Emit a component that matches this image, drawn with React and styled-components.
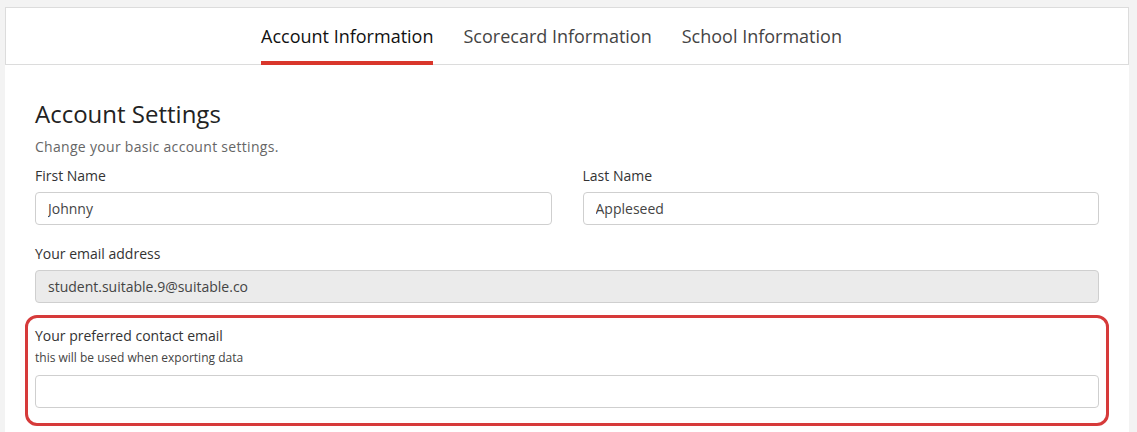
import styled, { createGlobalStyle } from "styled-components"

const GlobalStyle = createGlobalStyle`
    body {
        margin: 0;
        background: #f3f3f3;
        font-family: "Open Sans", "Noto Sans", sans-serif;
        color: #333;
    }
`

const Page = styled.div`
    padding: 7px 8px 0 5px;
    display: flex;
    flex-direction: column;
    height: 100vh;
    box-sizing: border-box;
    overflow: hidden;
`

const TabBar = styled.nav`
    background: #fff;
    border: 1px solid #dcdcdc;
    height: 56px;
    display: flex;
    justify-content: center;
    gap: 30px;
    padding-right: 31px;
    flex-shrink: 0;
`

const Tab = styled.div`
    display: flex;
    align-items: center;
    font-size: 18px;
    color: ${(p) => (p.active ? "#111" : "#444")};
    font-weight: ${(p) => (p.active ? 500 : 400)};
    border-bottom: 4px solid ${(p) => (p.active ? "#d9362b" : "transparent")};
    padding-top: 2px;
    margin-bottom: -1px;
`

const Card = styled.section`
    background: #fff;
    padding: 34px 30px 0 30px;
    flex: 1;
`

const Title = styled.h1`
    margin: 0;
    font-size: 24px;
    font-weight: 500;
    color: #222;
    line-height: 30px;
`

const Subtitle = styled.p`
    margin: 9px 0 0;
    font-size: 14px;
    letter-spacing: 0.3px;
    color: #666;
    line-height: 18px;
`

const Row = styled.div`
    display: grid;
    grid-template-columns: 1fr 1fr;
    gap: 31px;
    margin-top: 11px;
`

const Field = styled.div`
    display: flex;
    flex-direction: column;
    margin-top: ${(p) => p.top || 0}px;
`

const Label = styled.label`
    font-size: 14px;
    color: #333;
    line-height: 18px;
`

const Hint = styled.span`
    font-size: 12px;
    color: #444;
    line-height: 14px;
    margin: 6px 0 3px;
`

const Input = styled.input`
    margin-top: 7px;
    height: 33px;
    box-sizing: border-box;
    border: 1px solid #cfcfcf;
    border-radius: 4px;
    padding: 0 12px;
    font-family: inherit;
    font-size: 14px;
    color: #444;
    background: ${(p) => (p.disabled ? "#ebebeb" : "#fff")};
    outline: none;
`

const Highlight = styled.div`
    margin: 12px -10px 0;
    padding: 9px 7px 15px;
    border: 3px solid #d63a3a;
    border-radius: 12px;
`

export default function App() {
    return (
        <>
            <GlobalStyle />
            <Page>
                <TabBar>
                    <Tab active>Account Information</Tab>
                    <Tab>Scorecard Information</Tab>
                    <Tab>School Information</Tab>
                </TabBar>
                <Card>
                    <Title>Account Settings</Title>
                    <Subtitle>Change your basic account settings.</Subtitle>
                    <Row>
                        <Field>
                            <Label>First Name</Label>
                            <Input defaultValue="Johnny" />
                        </Field>
                        <Field>
                            <Label>Last Name</Label>
                            <Input defaultValue="Appleseed" />
                        </Field>
                    </Row>
                    <Field top={20}>
                        <Label>Your email address</Label>
                        <Input disabled defaultValue="student.suitable.9@suitable.co" />
                    </Field>
                    <Highlight>
                        <Field>
                            <Label>Your preferred contact email</Label>
                            <Hint>this will be used when exporting data</Hint>
                            <Input />
                        </Field>
                    </Highlight>
                </Card>
            </Page>
        </>
    )
}
